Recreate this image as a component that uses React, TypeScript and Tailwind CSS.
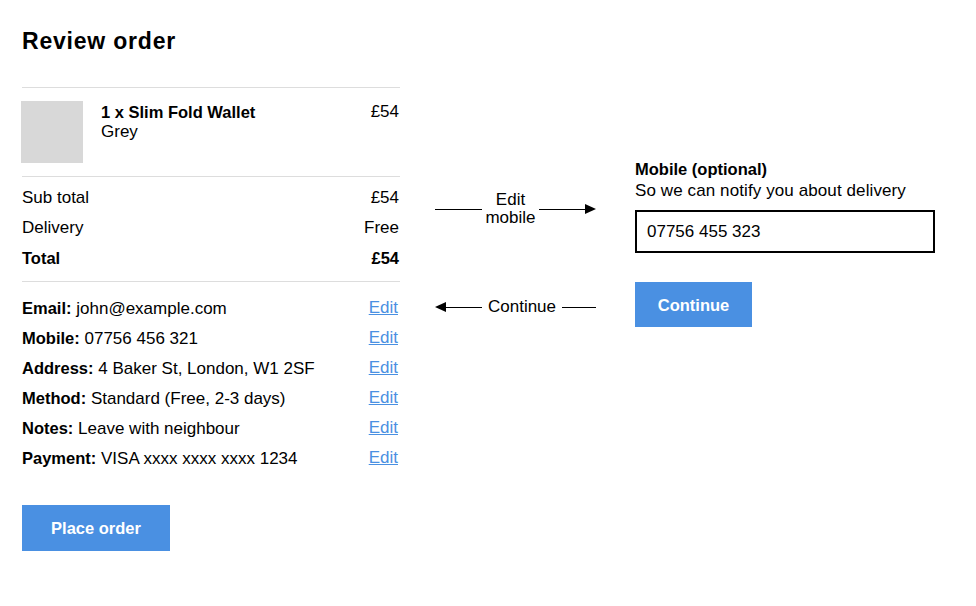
import React from "react";

const font = { fontFamily: '"Liberation Sans", Arial, sans-serif' };

function HeadRight() {
  return (
    <svg width="11" height="10" viewBox="0 0 11 10" className="block shrink-0">
      <polygon points="0,0 11,5 0,10" fill="#000" />
    </svg>
  );
}
function HeadLeft() {
  return (
    <svg width="11" height="10" viewBox="0 0 11 10" className="block shrink-0">
      <polygon points="11,0 0,5 11,10" fill="#000" />
    </svg>
  );
}

function DetailRow({ label, value }: { label: string; value: string }) {
  return (
    <div className="flex h-[30px] items-center justify-between">
      <div className="text-[17px] leading-[20px]">
        <span className="text-[16.5px] font-bold">{label}</span> {value}
      </div>
      <a href="#" className="mr-[2px] text-[17px] leading-[20px] text-[#4a90e2] underline">
        Edit
      </a>
    </div>
  );
}

export default function App() {
  return (
    <div className="min-h-[606px] bg-white pl-[22px] pt-[27px] text-black" style={font}>
      <h1 className="text-[23px] font-bold leading-[28px] tracking-[0.8px]">Review order</h1>
      <div className="mt-[32px] flex">
        {/* Left column */}
        <div className="w-[378px] shrink-0">
          <div className="flex border-t border-[#dddddd] pb-[13px] pt-[13px]">
            <div className="-ml-px h-[62px] w-[62px] shrink-0 bg-[#d8d8d8]" />
            <div className="ml-[18px] flex-1 pt-px">
              <div className="text-[16.5px] font-bold leading-[20px]">1 x Slim Fold Wallet</div>
              <div className="text-[17px] leading-[20px]">Grey</div>
            </div>
            <div className="pr-px pt-px text-[17px] leading-[20px]">£54</div>
          </div>
          <div className="border-t border-[#dddddd] pb-[8px] pt-[6px] text-[17px]">
            <div className="flex h-[30px] items-center justify-between">
              <span>Sub total</span>
              <span className="pr-px">£54</span>
            </div>
            <div className="flex h-[30px] items-center justify-between">
              <span>Delivery</span>
              <span className="pr-px">Free</span>
            </div>
            <div className="flex h-[30px] items-center justify-between text-[16.5px] font-bold">
              <span>Total</span>
              <span className="pr-px">£54</span>
            </div>
          </div>
          <div className="border-t border-[#dddddd] pt-[11px]">
            <DetailRow label="Email:" value="john@example.com" />
            <DetailRow label="Mobile:" value="07756 456 321" />
            <DetailRow label="Address:" value="4 Baker St, London, W1 2SF" />
            <DetailRow label="Method:" value="Standard (Free, 2-3 days)" />
            <DetailRow label="Notes:" value="Leave with neighbour" />
            <DetailRow label="Payment:" value="VISA xxxx xxxx xxxx 1234" />
          </div>
          <button className="mt-[32px] flex h-[46px] w-[148px] items-center justify-center bg-[#4a90e2] text-[16.5px] font-bold text-white">
            Place order
          </button>
        </div>

        {/* Middle annotations */}
        <div className="ml-[35px] w-[161px] shrink-0 text-[17px]">
          <div className="mt-[104px] flex h-[36px] items-center">
            <div className="h-px w-[47px] bg-black" />
            <div className="w-[57px] text-center leading-[18px]">
              Edit
              <br />
              mobile
            </div>
            <div className="h-px w-[46px] bg-black" />
            <HeadRight />
          </div>
          <div className="mt-[70px] flex h-[20px] items-center">
            <HeadLeft />
            <div className="h-px w-[36px] bg-black" />
            <div className="w-[80px] text-center leading-[20px]">Continue</div>
            <div className="h-px w-[34px] bg-black" />
          </div>
        </div>

        {/* Right column */}
        <div className="ml-[39px] w-[300px] shrink-0">
          <div className="mt-[71px] text-[16.5px] font-bold leading-[22px]">Mobile (optional)</div>
          <div className="text-[17px] leading-[22px] tracking-[0.1px]">So we can notify you about delivery</div>
          <div className="mt-[8px] flex h-[43px] w-[300px] items-center border-2 border-black pl-[10px] text-[17px]">
            07756 455 323
          </div>
          <button className="mt-[29px] flex h-[45px] w-[117px] items-center justify-center bg-[#4a90e2] pt-px text-[16.5px] font-bold text-white">
            Continue
          </button>
        </div>
      </div>
    </div>
  );
}
